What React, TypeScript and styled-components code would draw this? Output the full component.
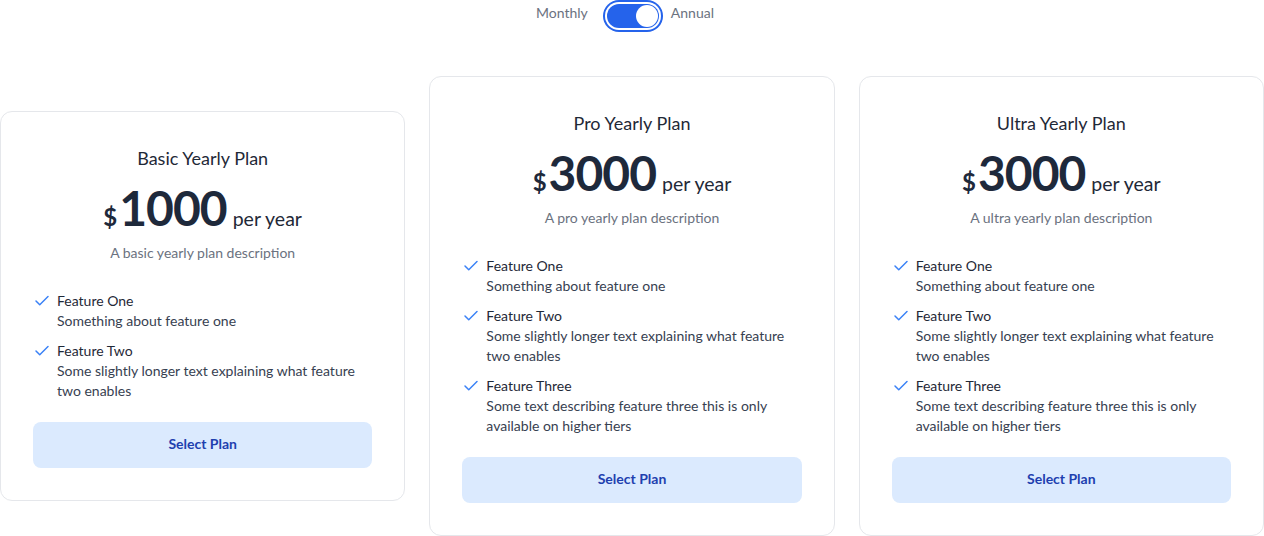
import React, { useState } from "react";
import styled, { createGlobalStyle } from "styled-components";

const GlobalStyle = createGlobalStyle`
  * { box-sizing: border-box; }
  html, body { margin: 0; padding: 0; background: #ffffff; }
  body { font-family: "Lato", "Noto Sans", sans-serif; color: #1f2937; }
`;

const Page = styled.div`
  width: 1264px;
  display: flex;
  flex-direction: column;
  align-items: center;
`;

const ToggleRow = styled.div`
  display: flex;
  align-items: center;
  height: 32px;
  padding-right: 14px;
`;

const ToggleLabel = styled.span<{ $side: "left" | "right" }>`
  align-self: flex-start;
  margin-top: 3px;
  margin-right: ${(p) => (p.$side === "left" ? "19px" : "0")};
  margin-left: ${(p) => (p.$side === "right" ? "12px" : "0")};
  font-size: 14px;
  line-height: 20px;
  color: #6b7280;
`;

const Switch = styled.button<{ $on: boolean }>`
  position: relative;
  width: 52px;
  height: 24px;
  border: none;
  padding: 0;
  margin: 0;
  border-radius: 999px;
  background: ${(p) => (p.$on ? "#2563eb" : "#e5e7eb")};
  box-shadow: 0 0 0 2px #ffffff, 0 0 0 4px #2563eb;
  cursor: pointer;
`;

const Knob = styled.span<{ $on: boolean }>`
  position: absolute;
  top: 1px;
  left: ${(p) => (p.$on ? "29px" : "1px")};
  width: 22px;
  height: 22px;
  border-radius: 50%;
  background: #ffffff;
`;

const Cards = styled.div`
  margin-top: 44px;
  width: 100%;
  display: grid;
  grid-template-columns: repeat(3, 1fr);
  gap: 24px;
  align-items: center;
`;

const Card = styled.div`
  border: 1px solid #e5e7eb;
  border-radius: 12px;
  padding: 32px;
  display: flex;
  flex-direction: column;
  background: #ffffff;
`;

const Title = styled.h3`
  margin: 0;
  text-align: center;
  font-size: 18px;
  line-height: 28px;
  font-weight: 400;
  color: #1f2937;
`;

const PriceRow = styled.div`
  margin-top: 12px;
  display: flex;
  justify-content: center;
  align-items: baseline;
  color: #1e293b;
  line-height: 48px;
`;

const Currency = styled.span`
  font-size: 24px;
  font-weight: 700;
  margin-right: 2px;
`;

const Amount = styled.span`
  font-size: 48px;
  font-weight: 700;
  letter-spacing: -1px;
`;

const Period = styled.span`
  font-size: 19.5px;
  margin-left: 6px;
  color: #1f2937;
`;

const Description = styled.p`
  margin: 0;
  text-align: center;
  font-size: 14px;
  line-height: 20px;
  color: #6b7280;
`;

const FeatureList = styled.ul`
  list-style: none;
  margin: 28px 0 0;
  padding: 0;
  display: flex;
  flex-direction: column;
  gap: 10px;
`;

const FeatureItem = styled.li`
  display: flex;
  align-items: flex-start;
  gap: 6px;
`;

const CheckBox = styled.span`
  flex: none;
  width: 18px;
  height: 20px;
  display: flex;
  align-items: center;
  justify-content: center;
  color: #3b82f6;
`;

const FeatureText = styled.div`
  font-size: 14px;
  line-height: 20px;
  color: #374151;
  padding-right: 12px;
`;

const FeatureName = styled.div`
  color: #1f2937;
`;

const SelectButton = styled.button`
  margin-top: 21px;
  height: 46px;
  width: 100%;
  border: none;
  border-radius: 8px;
  padding: 0 0 3px;
  background: #dbeafe;
  color: #1e40af;
  font-family: inherit;
  font-size: 14px;
  line-height: 20px;
  font-weight: 700;
  cursor: pointer;
`;

const Check = () => (
  <svg width="18" height="18" viewBox="0 0 24 24" fill="none" stroke="currentColor" strokeWidth="2" strokeLinecap="round" strokeLinejoin="round">
    <polyline points="20 6 9 17 4 12" />
  </svg>
);

type Feature = { name: string; text: string };
type Plan = { title: string; price: string; description: string; features: Feature[] };

const f1 = { name: "Feature One", text: "Something about feature one" };
const f2 = { name: "Feature Two", text: "Some slightly longer text explaining what feature two enables" };
const f3 = { name: "Feature Three", text: "Some text describing feature three this is only available on higher tiers" };

const plans: Plan[] = [
  { title: "Basic Yearly Plan", price: "1000", description: "A basic yearly plan description", features: [f1, f2] },
  { title: "Pro Yearly Plan", price: "3000", description: "A pro yearly plan description", features: [f1, f2, f3] },
  { title: "Ultra Yearly Plan", price: "3000", description: "A ultra yearly plan description", features: [f1, f2, f3] },
];

export default function App() {
  const [annual, setAnnual] = useState(true);
  return (
    <>
      <GlobalStyle />
      <Page>
        <ToggleRow>
          <ToggleLabel $side="left">Monthly</ToggleLabel>
          <Switch $on={annual} onClick={() => setAnnual(!annual)} aria-label="Toggle billing">
            <Knob $on={annual} />
          </Switch>
          <ToggleLabel $side="right">Annual</ToggleLabel>
        </ToggleRow>
        <Cards>
          {plans.map((p) => (
            <Card key={p.title}>
              <Title>{p.title}</Title>
              <PriceRow>
                <Currency>$</Currency>
                <Amount>{p.price}</Amount>
                <Period>per year</Period>
              </PriceRow>
              <Description>{p.description}</Description>
              <FeatureList>
                {p.features.map((f) => (
                  <FeatureItem key={f.name}>
                    <CheckBox>
                      <Check />
                    </CheckBox>
                    <FeatureText>
                      <FeatureName>{f.name}</FeatureName>
                      {f.text}
                    </FeatureText>
                  </FeatureItem>
                ))}
              </FeatureList>
              <SelectButton>Select Plan</SelectButton>
            </Card>
          ))}
        </Cards>
      </Page>
    </>
  );
}
